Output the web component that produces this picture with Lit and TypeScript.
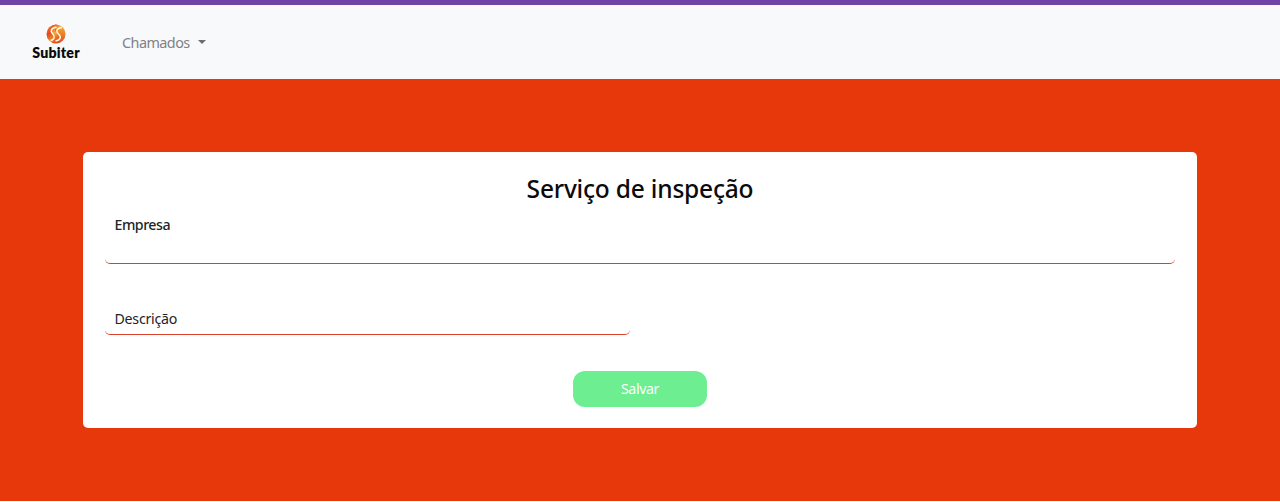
import { LitElement, html, css } from "lit";
import { customElement } from "lit/decorators.js";

@customElement("subiter-logo")
class SubiterLogo extends LitElement {
  static styles = css`
    :host { display: flex; flex-direction: column; align-items: center; width: 50px; }
    .mark { display: block; width: 20px; height: 20px; }
    .name { font: 800 14.2px/17px "Lato", sans-serif; color: #0b0b0b; white-space: nowrap; letter-spacing: 0.2px; }
  `;
  render() {
    return html`
      <svg class="mark" viewBox="0 0 40 40">
        <defs>
          <linearGradient id="l" x1="0" y1="0" x2="0.4" y2="1">
            <stop offset="0" stop-color="#f0902c" />
            <stop offset="0.5" stop-color="#e4481f" />
            <stop offset="1" stop-color="#f5a12c" />
          </linearGradient>
          <linearGradient id="m" x1="0" y1="0" x2="0.3" y2="1">
            <stop offset="0" stop-color="#e5461f" />
            <stop offset="0.5" stop-color="#f8b02f" />
            <stop offset="1" stop-color="#e4481f" />
          </linearGradient>
          <linearGradient id="r" x1="0" y1="0" x2="0" y2="1">
            <stop offset="0" stop-color="#f8b933" />
            <stop offset="1" stop-color="#e2431f" />
          </linearGradient>
          <clipPath id="c"><circle cx="20" cy="20" r="19" /></clipPath>
        </defs>
        <g clip-path="url(#c)">
          <rect width="20" height="40" fill="url(#l)" />
          <rect x="20" width="20" height="40" fill="url(#r)" />
          <path d="M25 1C12 8 12 14 18 20C24 26 22 33 13 39" fill="none" stroke="url(#m)" stroke-width="8" />
          <path d="M21 6C10 8 8 14 13 19C18 24 18 31 9 33" fill="none" stroke="#fff6e4" stroke-width="3" />
          <path d="M32 7C21 8 19 15 25 20C31 25 30 32 19 34" fill="none" stroke="#fff6e4" stroke-width="3" />
        </g>
      </svg>
      <span class="name">Subiter</span>
    `;
  }
}

@customElement("app-root")
class AppRoot extends LitElement {
  static styles = css`
    :host { display: flex; flex-direction: column; height: 502px; box-sizing: border-box; background: #fff; font-family: "Segoe UI", "Noto Sans", sans-serif; font-size: 15px; color: #212529; }
    * { box-sizing: border-box; }
    .strip { height: 5px; background: #6f42a5; flex: none; }
    .nav { height: 74px; flex: none; background: #f8f9fb; display: flex; align-items: center; padding: 0 31px; gap: 41px; }
    .menu { display: flex; align-items: center; color: #808183; gap: 8px; font-size: 14.4px; line-height: 22px; padding-top: 2px; }
    .word { letter-spacing: -0.55px; width: 67.5px; white-space: nowrap; }
    .caret { border: 4.5px solid transparent; border-top-color: #6c6d6f; border-bottom: 0; margin-top: -2px; }
    .main { height: 422px; flex: none; background: #e7380b; padding: 73px 83px; }
    .card { height: 276px; background: #fff; border-radius: 5px; padding: 19px 22px 21px; display: flex; flex-direction: column; }
    .title { margin: 0 0 1px; font-weight: 500; font-size: 24.5px; letter-spacing: -0.2px; line-height: 36px; text-align: center; color: #0b0b0b; white-space: nowrap; }
    .field { border-bottom: 1.5px solid #d9412a; border-radius: 5px; padding: 4.5px 9.5px; line-height: 24px; font-weight: 500; font-size: 14.2px; letter-spacing: -0.5px; }
    .company { height: 56px; }
    .description { width: 525px; height: 34px; margin-top: 37px; padding: 6px 9.5px 0; font-weight: 400; letter-spacing: -0.25px; }
    .save { align-self: center; margin-top: auto; width: 134px; height: 36px; border: 0; border-radius: 12px; background: #6cee91; color: #fff; font-family: inherit; font-size: 14.2px; letter-spacing: -0.4px; padding: 0 0 2px; }
  `;
  render() {
    return html`
      <div class="strip"></div>
      <nav class="nav">
        <subiter-logo></subiter-logo>
        <div class="menu"><span class="word">Chamados</span><span class="caret"></span></div>
      </nav>
      <main class="main">
        <form class="card">
          <h1 class="title">Serviço de inspeção</h1>
          <div class="field company">Empresa</div>
          <div class="field description">Descrição</div>
          <button class="save" type="button">Salvar</button>
        </form>
      </main>
    `;
  }
}
